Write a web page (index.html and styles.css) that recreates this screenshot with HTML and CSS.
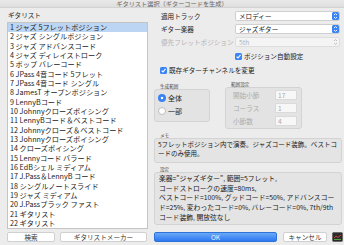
FILE: index.html
```html
<!DOCTYPE html>
<html lang="ja">
<head>
    <meta charset="UTF-8">
    <title>ギタリスト選択</title>
    <link rel="stylesheet" href="styles.css">
</head>
<body>
    <!-- Title Bar -->
    <div class="titlebar">ギタリスト選択（ギターコードを生成）</div>

    <div class="dialog">
        <!-- Guitarist list -->
        <div class="left">
            <div class="section-label">ギタリスト</div>
            <ul class="list">
                <li class="selected">1 ジャズ 5フレットポジション</li>
                <li>2 ジャズ シングルポジション</li>
                <li>3 ジャズ アドバンスコード</li>
                <li>4 ジャズ ディレイストローク</li>
                <li>5 ポップ バレーコード</li>
                <li>6 JPass 4音コード 5フレット</li>
                <li>7 JPass 4音コード シングル</li>
                <li>8 JamesT オープンポジション</li>
                <li>9 LennyBコード</li>
                <li>10 Johnnyクローズボイシング</li>
                <li>11 LennyBコード＆ベストコード</li>
                <li>12 Johnnyクローズ＆ベストコード</li>
                <li>13 Johnnyクローズボイシング</li>
                <li>14 クローズボイシング</li>
                <li>15 Lennyコード バラード</li>
                <li>16 EdBシェル ミディアム</li>
                <li>17 J.Pass＆LennyB コード</li>
                <li>18 シングルノートスライド</li>
                <li>19 ジャズ ミディアム</li>
                <li>20 J.Passブラック ファスト</li>
                <li>21 ギタリスト</li>
                <li>22 ギタリスト</li>
            </ul>
        </div>

        <!-- Options -->
        <div class="right">
            <div class="field">
                <span class="field-label">適用トラック</span>
                <div class="popup">メロディー<span class="stepper"><svg width="7" height="8" viewBox="0 0 7 8"><path d="M2 3 L3.5 1.6 L5 3 M2 5 L3.5 6.4 L5 5" fill="none" stroke="#fff" stroke-width="0.9"/></svg></span></div>
            </div>
            <div class="field">
                <span class="field-label">ギター楽器</span>
                <div class="popup">ジャズギター<span class="stepper"><svg width="7" height="8" viewBox="0 0 7 8"><path d="M2 3 L3.5 1.6 L5 3 M2 5 L3.5 6.4 L5 5" fill="none" stroke="#fff" stroke-width="0.9"/></svg></span></div>
            </div>
            <div class="field disabled">
                <span class="field-label">優先フレットポジション</span>
                <div class="popup">5th<span class="stepper"><svg width="7" height="8" viewBox="0 0 7 8"><path d="M2 3 L3.5 1.6 L5 3 M2 5 L3.5 6.4 L5 5" fill="none" stroke="#b8b8b8" stroke-width="0.9"/></svg></span></div>
            </div>

            <label class="check auto-pos"><span class="checkbox"><svg width="7" height="7" viewBox="0 0 7 7"><path d="M1.6 3.6 L3 5 L5.5 1.8" fill="none" stroke="#fff" stroke-width="1.1"/></svg></span>ポジション自動設定</label>
            <label class="check channel"><span class="checkbox"><svg width="7" height="7" viewBox="0 0 7 7"><path d="M1.6 3.6 L3 5 L5.5 1.8" fill="none" stroke="#fff" stroke-width="1.1"/></svg></span>既存ギターチャンネルを変更</label>

            <div class="groups">
                <div class="group-wrap">
                    <div class="small-label gen-label">生成範囲</div>
                    <div class="group gen-range">
                        <div class="radio-row"><span class="radio on"></span>全体</div>
                        <div class="radio-row"><span class="radio"></span>一部</div>
                    </div>
                </div>
                <div class="group-wrap">
                    <div class="small-label">範囲設定</div>
                    <div class="group range-set">
                        <div class="range-row"><span>開始小節</span><span class="num">17</span></div>
                        <div class="range-row"><span>コーラス</span><span class="num">1</span></div>
                        <div class="range-row"><span>小節数</span><span class="num">4</span></div>
                    </div>
                </div>
            </div>

            <div class="small-label memo-label">メモ</div>
            <div class="textbox memo">5フレットポジション内で演奏。ジャズコード装飾。ベストコ<wbr>ードのみ使用。</div>

            <div class="small-label">設定</div>
            <div class="textbox settings">楽器="ジャズギター", 範囲=5フレット,
コードストロークの速度=80ms,
ベストコード=100%, グッドコード=50%, アドバンスコード=25%, 変わったコード=0%, バレーコード=0%, 7th/9thコード装飾, 開放弦なし</div>
        </div>

        <!-- Buttons -->
        <div class="footer-left">
            <button class="btn search">検索</button>
            <button class="btn maker">ギタリストメーカー</button>
        </div>
        <div class="footer-right">
            <button class="btn ok">OK</button>
            <button class="btn cancel">キャンセル</button>
            <span class="app-icon"><svg width="11" height="10" viewBox="0 0 11 10"><rect x="0.5" y="0.5" width="10" height="9" rx="1" fill="#2b2b2b" stroke="#555" stroke-width="0.6"/><path d="M2 6 L4 4 L6 5.5 L9 3" fill="none" stroke="#d9473b" stroke-width="0.9"/><path d="M2 7.5 L9 7.5" stroke="#5fbf4a" stroke-width="0.8"/></svg></span>
        </div>
    </div>
</body>
</html>
```

FILE: styles.css
```css
body {
    margin: 0;
    width: 344px;
    height: 245px;
    overflow: hidden;
    background-color: #ececec;
    font-family: "Noto Sans CJK JP", sans-serif;
    font-size: 6.6px;
    color: #222;
}

/* Title Bar */
.titlebar {
    height: 7px;
    line-height: 8px;
    font-size: 6.2px;
    text-align: center;
    color: #666;
    background: linear-gradient(#e9e9e9, #dedede);
    border-bottom: 1px solid #d2d2d2;
    overflow: hidden;
}

/* Main grid */
.dialog {
    display: grid;
    grid-template-columns: 141px 189px;
    grid-template-rows: 218px 10px;
    column-gap: 6px;
    row-gap: 3px;
    padding: 3px 0 0 7px;
}

.left {
    display: flex;
    flex-direction: column;
}
.section-label {
    line-height: 9px;
    margin-bottom: 2px;
    padding-left: 1px;
}
.list {
    flex: 1;
    margin: 0;
    padding: 0;
    list-style: none;
    background-color: #fff;
    border: 1px solid #c4c4c4;
    overflow: hidden;
    font-size: 7.2px;
}
.list li {
    height: 9.33px;
    line-height: 9.33px;
    padding-left: 2px;
    white-space: nowrap;
}
.list li.selected {
    background-color: #bcd5f3;
}

/* Right side */
.right {
    display: flex;
    flex-direction: column;
    width: 188px;
}
.field {
    display: flex;
    align-items: center;
    height: 10px;
    margin-bottom: 3px;
    padding-left: 7px;
}
.field-label {
    width: 74px;
    white-space: nowrap;
}
.popup {
    box-sizing: border-box;
    width: 105px;
    height: 10px;
    display: flex;
    justify-content: space-between;
    align-items: center;
    padding-left: 3px;
    line-height: 8px;
    background-color: #fff;
    border: 1px solid #cfcfcf;
    border-radius: 2px;
}
.stepper {
    width: 7px;
    height: 8px;
    background-color: #3a84f4;
    border-radius: 1.5px;
    display: flex;
}
.disabled .field-label,
.disabled .popup {
    color: #b3b3b3;
}
.disabled .popup {
    background-color: #f4f4f4;
    border-color: #dedede;
}
.disabled .stepper {
    background-color: transparent;
}

.check {
    display: flex;
    align-items: center;
    gap: 2px;
    height: 10px;
}
.auto-pos {
    margin-top: 1px;
    padding-left: 81px;
}
.channel {
    margin-top: 4px;
    padding-left: 6px;
}
.checkbox {
    width: 7px;
    height: 7px;
    background-color: #3a84f4;
    border-radius: 1.5px;
    display: flex;
}

.small-label {
    font-size: 4.6px;
    line-height: 6px;
    color: #444;
    padding-left: 6px;
}

.groups {
    display: flex;
    gap: 15px;
    margin-top: 6px;
}
.gen-label {
    margin-top: 2px;
}
.group {
    box-sizing: border-box;
    background-color: #e3e3e3;
    border: 1px solid #d3d3d3;
    border-radius: 3px;
}
.gen-range {
    width: 56px;
    height: 33px;
    padding: 3px 3px;
}
.radio-row {
    display: flex;
    align-items: center;
    gap: 2px;
    height: 10px;
    margin-bottom: 3px;
    font-size: 7px;
}
.radio {
    box-sizing: border-box;
    width: 8px;
    height: 8px;
    border-radius: 50%;
    background-color: #fff;
    border: 1px solid #bdbdbd;
}
.radio.on {
    border: none;
    background: radial-gradient(circle, #fff 0 1.3px, #3a84f4 1.6px);
}
.range-set {
    width: 77px;
    height: 42px;
    padding: 2px 4px 0 7px;
    color: #ababab;
}
.range-row {
    display: flex;
    justify-content: space-between;
    align-items: center;
    height: 10px;
    margin-bottom: 3px;
}
.num {
    box-sizing: border-box;
    width: 22px;
    height: 10px;
    line-height: 8px;
    padding-left: 2px;
    background-color: #f7f7f7;
    border: 1px solid #dadada;
}

.memo-label {
    margin-top: 3px;
}
.textbox {
    box-sizing: border-box;
    background-color: #e4e4e4;
    border: 1px solid #d3d3d3;
    border-radius: 3px;
    margin-bottom: 3px;
}
.memo {
    height: 25px;
    padding: 1px 2px 1px 3px;
    font-size: 6.5px;
    line-height: 9px;
}
.settings {
    height: 53px;
    padding: 1px 5px 1px 4px;
    font-size: 6.8px;
    line-height: 9.7px;
    white-space: pre-line;
}

/* Footer buttons */
.footer-left,
.footer-right {
    display: flex;
    align-items: center;
    gap: 5px;
}
.footer-right {
    gap: 6px;
}
.btn {
    box-sizing: border-box;
    height: 10px;
    padding: 0;
    font-family: inherit;
    font-size: 6.6px;
    line-height: 8px;
    color: #333;
    background-color: #fff;
    border: 1px solid #d0d0d0;
    border-radius: 2px;
}
.search {
    width: 48px;
}
.maker {
    width: 87px;
}
.ok {
    width: 123px;
    color: #e8f0ff;
    background: linear-gradient(#6aa9f8, #2a78f2);
    border-color: #2f72d8;
}
.cancel {
    width: 44px;
}
.app-icon {
    display: flex;
    margin-left: -1px;
}
```
